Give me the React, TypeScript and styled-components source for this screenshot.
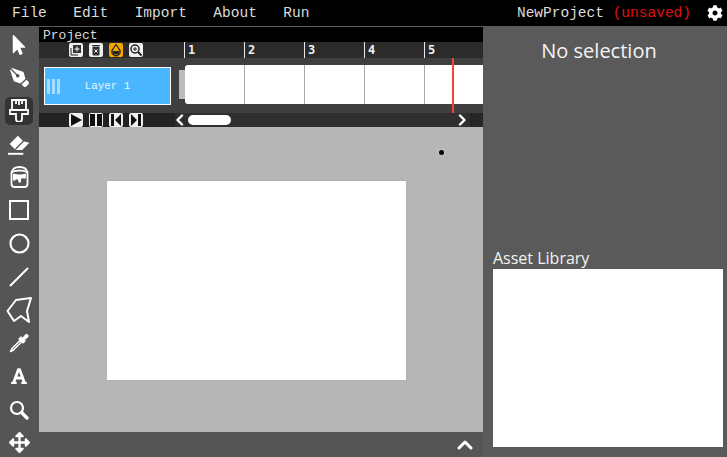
import React from "react";
import styled, { createGlobalStyle } from "styled-components";
import { FaCog, FaFont, FaMousePointer, FaArrowsAlt, FaPenNib } from "react-icons/fa";

const Global = createGlobalStyle`
  html, body { margin: 0; padding: 0; width: 727px; height: 457px; overflow: hidden; background: #555; }
`;

const mono = `"Liberation Mono", "DejaVu Sans Mono", monospace`;

const Page = styled.div`
  width: 727px; height: 457px; display: flex; flex-direction: column; overflow: hidden;
`;
const MenuBar = styled.header`
  height: 26px; flex: none; background: #000; border-bottom: 1px solid #5a5a5a;
  display: flex; align-items: center; padding: 0 4px 0 12px; font: 14.5px ${mono}; color: #dcdcdc;
`;
const MenuItem = styled.span`
  margin-right: 26.500px;
`;
const ProjectName = styled.span`
  margin-left: auto; margin-right: 8px;
`;
const Unsaved = styled.span`
  color: #e01010;
`;
const GearSlot = styled.span`
  display: flex; color: #fff; font-size: 16px; margin-left: 8px;
`;
const Body = styled.div`
  flex: 1; display: flex; min-height: 0;
`;
const ToolBar = styled.nav`
  width: 39px; flex: none; background: #555; display: flex; flex-direction: column; align-items: center; padding-top: 3.500px;
`;
const ToolButton = styled.div<{ $active?: boolean }>`
  width: 28px; height: 28px; margin-bottom: 5.200px; margin-right: 1px; border-radius: 5px; display: flex; align-items: center; justify-content: center;
  color: #fff; background: ${(p) => (p.$active ? "#333" : "transparent")}; flex: none;
`;
const Center = styled.main`
  width: 444px; flex: none; display: flex; flex-direction: column;
`;
const Timeline = styled.section`
  height: 100px; flex: none; display: flex; flex-direction: column; position: relative; overflow: hidden; background: #3d3d3d;
`;
const TitleBar = styled.div`
  height: 15px; flex: none; background: #000; color: #dcdcdc; font: 13px/17px ${mono}; padding-left: 4px;
`;
const HeaderRow = styled.div`
  height: 16px; flex: none; display: flex; background: #2b2b2b;
`;
const LayerTools = styled.div`
  width: 136px; flex: none; padding-left: 30px; display: flex; align-items: center; gap: 6px; box-sizing: border-box;
`;
const MiniButton = styled.span<{ $orange?: boolean }>`
  width: 14px; height: 14px; border-radius: 2px; background: ${(p) => (p.$orange ? "#f6a800" : "#f0f0f0")}; display: flex; align-items: center; justify-content: center; flex: none;
`;
const Ruler = styled.div`
  display: flex; padding-left: 9px; flex: 1; overflow: hidden;
`;
const RulerTick = styled.span`
  width: 60px; flex: none; box-sizing: border-box; border-left: 1px solid #e8e8e8; color: #f0f0f0; font: bold 12px/17px "DejaVu Sans Mono", monospace; padding-left: 3px;
`;
const TrackRow = styled.div`
  height: 55px; flex: none; display: flex; background: #3f3f3f;
`;
const LayerCell = styled.div`
  width: 136px; flex: none; padding: 9px 0 0 5px; box-sizing: border-box;
`;
const LayerCard = styled.div`
  width: 127px; height: 38px; box-sizing: border-box; border: 1px solid #fff; background: #4ab6ff; color: #e8f6ff; font: 10.800px/37px ${mono}; text-align: center; position: relative;
`;
const Grip = styled.span`
  position: absolute; left: 2px; top: 11px; width: 13px; height: 15px;
  background: repeating-linear-gradient(90deg, #a8dcff 0 3px, #4ab6ff 3px 5px);
`;
const Frames = styled.div`
  flex: 1; display: flex; align-items: flex-start; padding: 7px 0 0 4px; overflow: hidden; min-width: 0;
`;
const Handle = styled.span`
  width: 6px; height: 29px; margin-top: 5px; background: #bdbdbd; flex: none;
`;
const Frame = styled.span<{ $first?: boolean }>`
  width: 60px; height: 39px; box-sizing: border-box; background: #fff; border-right: 1px solid #a8a8a8; flex: none; border-radius: ${(p) => (p.$first ? "3px 0 0 3px" : "0")};
`;
const ControlRow = styled.div`
  height: 14px; flex: none; display: flex; background: #2f2f2f;
`;
const Controls = styled.div`
  width: 136px; flex: none; background: #232323; padding-left: 30px; display: flex; align-items: center; gap: 6px; box-sizing: border-box;
`;
const Scroll = styled.div`
  flex: 1; display: flex; align-items: center; color: #fff; position: relative;
`;
const Thumb = styled.span`
  width: 43px; height: 10px; border-radius: 5px; background: #fff; margin-left: 3px;
`;
const RightArrow = styled.span`
  display: flex; margin-left: auto; margin-right: 3px;
`;
const ScrollEnd = styled.span`
  width: 13px; align-self: stretch; background: #262626; flex: none;
`;
const Playhead = styled.span`
  position: absolute; left: 413px; top: 31px; width: 2px; height: 55px; background: #f44336;
`;
const Stage = styled.div`
  height: 305px; flex: none; background: #b6b6b6; padding: 54px 0 0 68px; box-sizing: border-box; position: relative;
`;
const Paper = styled.div`
  width: 299px; height: 199px; background: #fff; box-shadow: 0 0 1px #999;
`;
const Dot = styled.span`
  position: absolute; left: 399px; top: 22px; width: 5px; height: 5px; border-radius: 50%; background: #000; border: 1px solid rgba(255, 255, 255, 0.75);
`;
const BottomBar = styled.div`
  flex: 1; background: #555; display: flex; justify-content: flex-end; align-items: center; padding: 1px 10px 0 0;
`;
const Side = styled.aside`
  flex: 1; background: #5a5a5a; display: flex; flex-direction: column; padding: 0 4px 10px 10px; color: #fff; font-family: "Open Sans", "Noto Sans", sans-serif; min-width: 0;
`;
const SideTitle = styled.div`
  height: 221px; flex: none; padding-top: 10px; box-sizing: border-box; text-align: center; font-size: 20px; line-height: 27px; color: #f4f4f4; margin-left: -10px; margin-right: 8px;
`;
const AssetLabel = styled.div`
  font-size: 16px; line-height: 21px; color: #f4f4f4; flex: none;
`;
const AssetBox = styled.div`
  flex: 1; background: #fff;
`;

const Brush = () => (
  <svg width="20" height="23" viewBox="0 0 20 23" fill="none" stroke="#fff" strokeWidth="1.800">
    <path d="M3 1h14v10H3z" />
    <path d="M7 1v4M10 1v5M13 1v4" />
    <path d="M1 11h18v4h-6v5a3 3 0 0 1-6 0v-5H1z" />
  </svg>
);
const Eraser = () => (
  <svg width="23" height="21" viewBox="0 0 21 19">
    <path d="M9 1.500 1.500 9l5 5 7.500-7.500z" fill="#fff" />
    <path d="M14 6.500 19.500 8 13 14.500H7z" fill="#fff" />
    <path d="M14.500 6 7 13.500" stroke="#555" strokeWidth="1.200" />
    <path d="M0 18h14" stroke="#fff" strokeWidth="1.800" />
  </svg>
);
const Bucket = () => (
  <svg width="19" height="22" viewBox="0 0 19 22" fill="none" stroke="#fff" strokeWidth="1.800">
    <path d="M2 7q0-6 7.500-6T17 7" />
    <path d="M1.500 6q8-3 16 0v12q0 3-3 3h-10q-3 0-3-3z" />
    <path d="M3 7.500q6.500 2 13 0v4l-2 1.500-1-1-2 1v3l-2 1-1-3-2-1-1 2-2-1z" fill="#fff" stroke="none" />
  </svg>
);
const Square = () => (
  <svg width="20" height="20" viewBox="0 0 20 20" fill="none" stroke="#fff" strokeWidth="2">
    <rect x="1" y="1" width="18" height="18" />
  </svg>
);
const Circle = () => (
  <svg width="21" height="21" viewBox="0 0 21 21" fill="none" stroke="#fff" strokeWidth="2.200">
    <circle cx="10.500" cy="10.500" r="9" />
  </svg>
);
const Line = () => (
  <svg width="20" height="20" viewBox="0 0 20 20" fill="none" stroke="#fff" strokeWidth="2" strokeLinecap="round">
    <path d="M1.500 18.500 18.500 1.500" />
  </svg>
);
const Poly = () => (
  <svg width="26" height="28" viewBox="0 0 26 28" fill="none" stroke="#fff" strokeWidth="2" strokeLinejoin="round">
    <path d="M1.500 15 10 4l15-2-4 13 2 11-8-6-7 5z" />
  </svg>
);
const Dropper = () => (
  <svg width="20" height="20" viewBox="0 0 20 20" fill="none" stroke="#fff">
    <path d="M12 3.500l1.500 1.500 3-3.500a1.800 1.800 0 0 1 2.500 2.500L15.500 7l1 1-2.500 2.500L9.500 6z" fill="#fff" strokeWidth="0.600" />
    <path d="M11 7.500 3 15.500 1.500 18.500 4.500 17 12.500 9z" strokeWidth="1.500" strokeLinejoin="round" />
  </svg>
);
const Magnifier = () => (
  <svg width="20" height="20" viewBox="0 0 20 20" fill="none" stroke="#fff">
    <circle cx="8" cy="8" r="6" strokeWidth="2.200" />
    <path d="M12.500 12.500 18 18" strokeWidth="3.400" strokeLinecap="round" />
  </svg>
);
const Chevron = ({ d, w = 10, h = 12, sw = 2.4 }: { d: string; w?: number; h?: number; sw?: number }) => (
  <svg width={w} height={h} viewBox={`0 0 ${w} ${h}`} fill="none" stroke="#fff" strokeWidth={sw} strokeLinecap="round" strokeLinejoin="round">
    <path d={d} />
  </svg>
);
const Mini = ({ children }: { children: React.ReactNode }) => (
  <svg width="14" height="14" viewBox="0 0 14 14">{children}</svg>
);

const tools = [
  <FaMousePointer size={20} />,
  <FaPenNib size={19} style={{ transform: "rotate(90deg)" }} />,
  <Brush />,
  <Eraser />,
  <Bucket />,
  <Square />,
  <Circle />,
  <Line />,
  <Poly />,
  <Dropper />,
  <FaFont size={18} />,
  <Magnifier />,
  <FaArrowsAlt size={21} />,
];

export default function App() {
  return (
    <Page>
      <Global />
      <MenuBar>
        <MenuItem>File</MenuItem>
        <MenuItem>Edit</MenuItem>
        <MenuItem>Import</MenuItem>
        <MenuItem>About</MenuItem>
        <MenuItem>Run</MenuItem>
        <ProjectName>
          NewProject <Unsaved>(unsaved)</Unsaved>
        </ProjectName>
        <GearSlot><FaCog /></GearSlot>
      </MenuBar>
      <Body>
        <ToolBar>
          {tools.map((t, i) => (
            <ToolButton key={i} $active={i === 2}>{t}</ToolButton>
          ))}
        </ToolBar>
        <Center>
          <Timeline>
            <TitleBar>Project</TitleBar>
            <HeaderRow>
              <LayerTools>
                <MiniButton>
                  <Mini><path d="M2 5v7h7" fill="none" stroke="#222" strokeWidth="1" /><rect x="4" y="2" width="8" height="8" fill="#333" /><path d="M8 3.500v5M5.500 6h5" stroke="#fff" /></Mini>
                </MiniButton>
                <MiniButton>
                  <Mini><path d="M3 2.500h8M4 4h6v8H4z" fill="#333" stroke="#333" /><path d="M5.500 6.500l3 3M8.500 6.500l-3 3" stroke="#fff" /></Mini>
                </MiniButton>
                <MiniButton $orange>
                  <Mini><path d="M7 1.500 4 6a4 4 0 1 0 6 0z" fill="none" stroke="#222" strokeWidth="1.200" /><path d="M3.500 8h7a3.500 3.500 0 0 1-7 0z" fill="#222" /></Mini>
                </MiniButton>
                <MiniButton>
                  <Mini><circle cx="6" cy="6" r="4" fill="none" stroke="#222" strokeWidth="1.500" /><path d="M9 9l3.500 3.500" stroke="#222" strokeWidth="2" /><path d="M6 4v4M4 6h4" stroke="#222" /></Mini>
                </MiniButton>
              </LayerTools>
              <Ruler>
                {[1, 2, 3, 4, 5].map((n) => (
                  <RulerTick key={n}>{n}</RulerTick>
                ))}
              </Ruler>
            </HeaderRow>
            <TrackRow>
              <LayerCell>
                <LayerCard><Grip />Layer 1</LayerCard>
              </LayerCell>
              <Frames>
                <Handle />
                {[0, 1, 2, 3, 4, 5].map((n) => (
                  <Frame key={n} $first={n === 0} />
                ))}
              </Frames>
            </TrackRow>
            <ControlRow>
              <Controls>
                <MiniButton><Mini><path d="M2 1l11 6-11 6z" fill="#111" /></Mini></MiniButton>
                <MiniButton><Mini><path d="M1 1h5v12H1zM8 1h5v12H8z" fill="#111" /></Mini></MiniButton>
                <MiniButton><Mini><path d="M2 1h3v12H2zM12 1v12L6 7z" fill="#111" /></Mini></MiniButton>
                <MiniButton><Mini><path d="M9 1h3v12H9zM2 1v12l6-6z" fill="#111" /></Mini></MiniButton>
              </Controls>
              <Scroll>
                <Chevron d="M7 1.500 2.500 6 7 10.500" />
                <Thumb />
                <RightArrow><Chevron d="M3 1.500 7.500 6 3 10.500" /></RightArrow>
                <ScrollEnd />
              </Scroll>
            </ControlRow>
            <Playhead />
          </Timeline>
          <Stage>
            <Paper />
            <Dot />
          </Stage>
          <BottomBar>
            <Chevron w={16} h={10} sw={3} d="M2 8 8 2l6 6" />
          </BottomBar>
        </Center>
        <Side>
          <SideTitle>No selection</SideTitle>
          <AssetLabel>Asset Library</AssetLabel>
          <AssetBox />
        </Side>
      </Body>
    </Page>
  );
}
